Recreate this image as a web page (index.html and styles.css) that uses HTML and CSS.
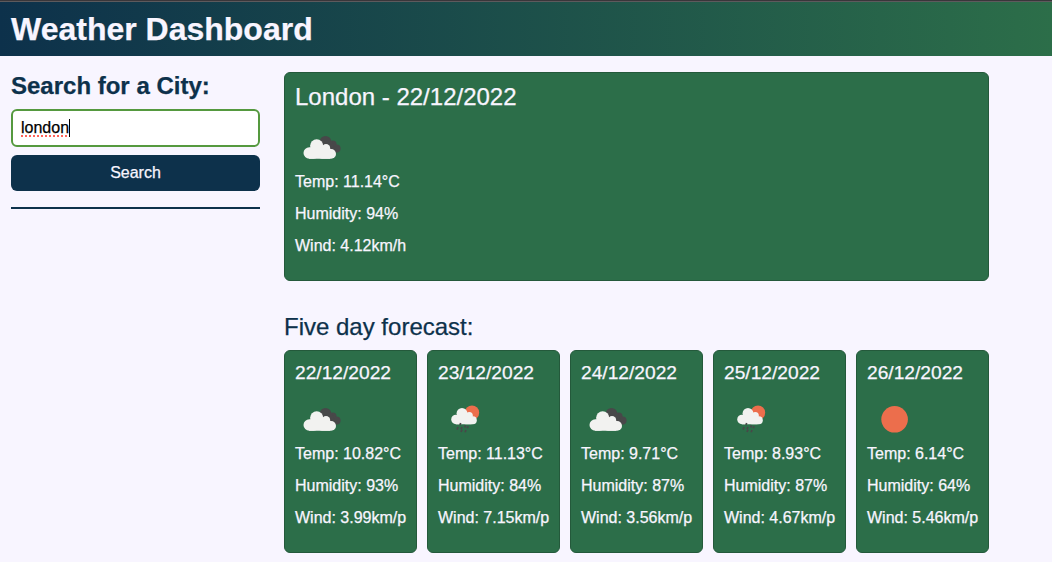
FILE: index.html
```html
<!DOCTYPE html>
<html lang="en">
<head>
<meta charset="utf-8">
<title>Weather Dashboard</title>
<link rel="stylesheet" href="styles.css">
</head>
<body>
<svg class="symbols" aria-hidden="true">
  <symbol id="clouds" viewBox="0 0 50 50">
    <g fill="#484849"><circle cx="30.500" cy="21.600" r="5.700"/><circle cx="37.600" cy="24.500" r="4"/><circle cx="41.500" cy="28.600" r="4.100"/><path d="M29 21h8l4 11-12-3z"/></g>
    <g fill="#f2f2f0"><circle cx="21.700" cy="25.800" r="6.600"/><circle cx="31" cy="28.200" r="4.200"/><rect x="8.500" y="27.200" width="16" height="11.600" rx="5.800"/><rect x="22" y="29" width="19" height="9.800" rx="4.900"/><path d="M16 27h16l3 6v5.800H14z"/></g>
  </symbol>
  <symbol id="rain" viewBox="0 0 50 50">
    <circle cx="34" cy="20.700" r="7.200" fill="#ec6e4c"/>
    <g fill="#f2f2f0"><circle cx="24" cy="21.300" r="5.400"/><circle cx="31.300" cy="23.500" r="3.500"/><rect x="13.200" y="22.700" width="13" height="9.500" rx="4.700"/><rect x="24" y="24.200" width="14.800" height="8" rx="4"/><path d="M19.500 22h11l3 5v5.200H18z"/></g>
    <path fill="none" stroke="#484849" stroke-width="1.700" d="m22.700 31-.8 2m-1.800 2-1.100 2.600m5-2.600-1 2.200m4.500-4-.7 2.200m-2.800 2.200-1 2.400m5-2-.9 2.200m3-6-.8 2"/>
  </symbol>
  <symbol id="sun" viewBox="0 0 50 50"><circle cx="27.600" cy="27.300" r="13.300" fill="#ec6e4c"/></symbol>
</svg>
<header class="hero"><h1>Weather Dashboard</h1></header>
<div class="layout">
  <aside class="sidebar">
    <h2>Search for a City:</h2>
    <div class="search-input" role="textbox"><span class="misspelled">london</span><span class="caret"></span></div>
    <button class="search-button">Search</button>
    <hr>
  </aside>
  <main>
    <section class="card today">
      <h3>London - 22/12/2022</h3>
      <svg class="icon"><use href="#clouds"/></svg>
      <p>Temp: 11.14°C</p><p>Humidity: 94%</p><p>Wind: 4.12km/h</p>
    </section>
    <h3 class="forecast-title">Five day forecast:</h3>
    <section class="forecast">
      <article class="card"><h5>22/12/2022</h5><svg class="icon"><use href="#clouds"/></svg><p>Temp: 10.82°C</p><p>Humidity: 93%</p><p>Wind: 3.99km/p</p></article>
      <article class="card"><h5>23/12/2022</h5><svg class="icon"><use href="#rain"/></svg><p>Temp: 11.13°C</p><p>Humidity: 84%</p><p>Wind: 7.15km/p</p></article>
      <article class="card"><h5>24/12/2022</h5><svg class="icon"><use href="#clouds"/></svg><p>Temp: 9.71°C</p><p>Humidity: 87%</p><p>Wind: 3.56km/p</p></article>
      <article class="card"><h5>25/12/2022</h5><svg class="icon"><use href="#rain"/></svg><p>Temp: 8.93°C</p><p>Humidity: 87%</p><p>Wind: 4.67km/p</p></article>
      <article class="card"><h5>26/12/2022</h5><svg class="icon"><use href="#sun"/></svg><p>Temp: 6.14°C</p><p>Humidity: 64%</p><p>Wind: 5.46km/p</p></article>
    </section>
  </main>
</div>
</body>
</html>
```
FILE: styles.css
```css
* { box-sizing: border-box; }
body {
  margin: 0;
  background: #f8f5ff;
  color: #0d314b;
  font: 16px/24px "Liberation Sans", Arial, sans-serif;
  -webkit-text-stroke: 0.25px currentColor;
  overflow: hidden;
}
h1, h2, h3, h5, p { margin: 0; }
.symbols { display: none; }
.hero {
  height: 55px;
  margin-top: 1px;
  padding: 8px 11px 0;
  border-top: 1px solid #5d5a5d;
  box-shadow: 0 -1px #39363a;
  background: linear-gradient(90deg, #0d314b, #2c6e49);
  color: #f8f5ff;
}
h1 { font-size: 32px; line-height: 38px; }
.layout { display: flex; gap: 24px; padding: 16px 11px 0; }
.sidebar { width: 249px; display: flex; flex-direction: column; }
h2 { font-size: 24px; line-height: 27px; margin-bottom: 10px; }
.search-input {
  display: flex;
  align-items: center;
  height: 38px;
  padding: 0 8px;
  border: 2px solid #55993f;
  border-radius: 6px;
  background: #fff;
  color: #000;
  margin-bottom: 8px;
}
.misspelled { text-decoration: underline dotted #ff6259 2px; text-underline-offset: 2px; text-decoration-skip-ink: none; }
.caret { width: 1px; height: 18px; background: #000; }
.search-button {
  height: 36px;
  padding: 0;
  border: 0;
  border-radius: 6px;
  background: #0d314b;
  color: #f8f5ff;
  font: inherit;
  -webkit-text-stroke: inherit;
}
hr { width: 100%; height: 2px; margin: 16px 0 0; border: 0; background: #0d314b; }
main { width: 705px; }
.card {
  padding: 10px;
  border: 1px solid #24593b;
  border-radius: 6px;
  background: #2c6e49;
  color: #f8f5ff;
  white-space: nowrap;
}
.today { height: 209px; }
.card h3, .forecast-title { font-size: 24px; font-weight: 400; line-height: 27px; }
.card h3 { margin-bottom: 10px; }
.card h5 { font-size: 19.200px; font-weight: 400; line-height: 23px; margin-bottom: 8px; }
.icon { display: block; width: 50px; height: 50px; }
.card p { margin-bottom: 8px; }
.forecast-title { margin: 32px 0 10px; }
.forecast { display: grid; grid-template-columns: repeat(5, 133px); gap: 10px; }
.forecast .card { height: 203px; }
```
